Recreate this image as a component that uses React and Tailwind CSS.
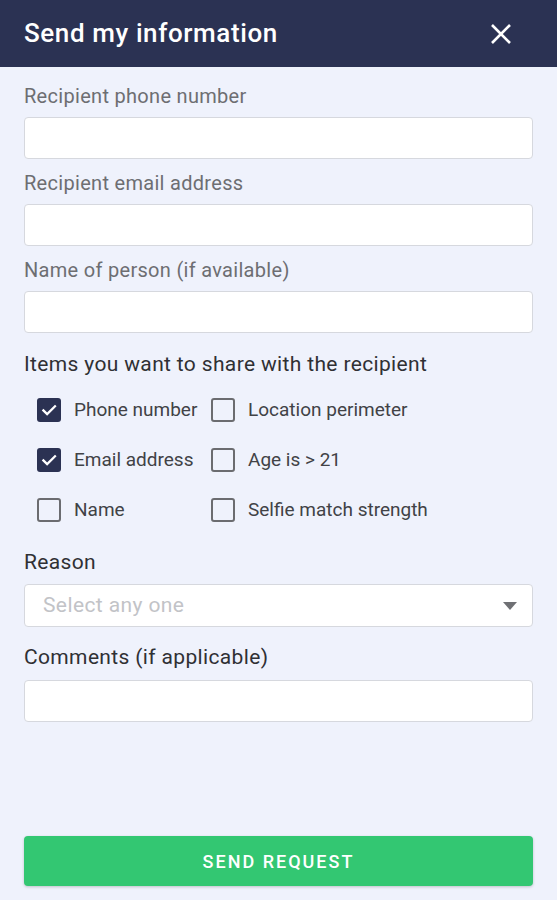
import React, { useState } from "react";

const FONT = { fontFamily: "Roboto, 'Noto Sans', sans-serif" };

function Field({ label, first }) {
  return (
    <div className={first ? "pt-[17px]" : "pt-3"}>
      <div className="text-[20px] tracking-[0.3px] leading-6 text-[#6d6e72] mb-[9px]">{label}</div>
      <input
        type="text"
        className="block w-full h-[42px] bg-white border border-[#d6d8de] rounded-[4px] px-4 text-[18px] outline-none"
      />
    </div>
  );
}

function Check({ label, checked, onToggle }) {
  return (
    <button type="button" onClick={onToggle} className="flex items-center h-6 text-left">
      <span
        className={
          "w-6 h-6 rounded-[3px] flex items-center justify-center " +
          (checked ? "bg-[#2b3253]" : "border-2 border-[#6b6c70] bg-transparent")
        }
      >
        {checked && (
          <svg width="18" height="18" viewBox="0 0 24 24" fill="none">
            <path d="M4.5 12.5l5 5L20 7" stroke="white" strokeWidth="3" strokeLinecap="square" />
          </svg>
        )}
      </span>
      <span className="ml-[13px] text-[19px] text-[#414246] leading-6">{label}</span>
    </button>
  );
}

export default function App() {
  const [items, setItems] = useState({
    phone: true,
    location: false,
    email: true,
    age: false,
    name: false,
    selfie: false,
  });

  const toggle = (k) => setItems({ ...items, [k]: !items[k] });

  return (
    <div style={FONT} className="h-[900px] w-full bg-[#eff2fc] flex flex-col">
      {/* header */}
      <div className="h-[67px] bg-[#2b3253] flex items-center justify-between pl-6 pr-[45px] shrink-0">
        <h1 className="text-white text-[26px] tracking-[0.6px] font-medium">Send my information</h1>
        <button type="button" className="text-white">
          <svg width="22" height="22" viewBox="0 0 22 22">
            <path d="M2 2L20 20M20 2L2 20" stroke="white" strokeWidth="2.6" />
          </svg>
        </button>
      </div>

      <div className="px-6 flex-1 flex flex-col">
        <Field label="Recipient phone number" first />
        <Field label="Recipient email address" />
        <Field label="Name of person (if available)" />

        <div className="mt-[19px] text-[21px] tracking-[0.35px] leading-6 text-[#2f3034]">
          Items you want to share with the recipient
        </div>

        <div className="mt-[22px] pl-[13px] grid grid-cols-[174px_1fr] gap-y-[26px]">
          <Check label="Phone number" checked={items.phone} onToggle={() => toggle("phone")} />
          <Check label="Location perimeter" checked={items.location} onToggle={() => toggle("location")} />
          <Check label="Email address" checked={items.email} onToggle={() => toggle("email")} />
          <Check label="Age is > 21" checked={items.age} onToggle={() => toggle("age")} />
          <Check label="Name" checked={items.name} onToggle={() => toggle("name")} />
          <Check label="Selfie match strength" checked={items.selfie} onToggle={() => toggle("selfie")} />
        </div>

        <div className="mt-[28px] text-[21px] tracking-[0.35px] leading-6 text-[#2f3034] mb-[10px]">Reason</div>
        <div className="h-[43px] bg-white border border-[#d6d8de] rounded-[4px] flex items-center justify-between pl-[18px] pr-[14px]">
          <span className="text-[21px] tracking-[0.4px] text-[#c2c3c7]">Select any one</span>
          <svg width="16" height="10" viewBox="0 0 16 10">
            <path d="M1 1h14L8 9z" fill="#6f7074" />
          </svg>
        </div>

        <div className="mt-[18px] text-[21px] tracking-[0.35px] leading-6 text-[#2f3034] mb-[11px]">
          Comments (if applicable)
        </div>
        <input
          type="text"
          className="block w-full h-[42px] bg-white border border-[#d6d8de] rounded-[4px] px-4 text-[18px] outline-none"
        />

        <div className="flex-1" />

        <button
          type="button"
          className="mb-[14px] h-[50px] w-full bg-[#33c772] rounded-[4px] shadow-[0_1px_3px_rgba(0,0,0,0.2)] text-white text-[18px] font-medium tracking-[2px]"
        >
          SEND REQUEST
        </button>
      </div>
    </div>
  );
}
